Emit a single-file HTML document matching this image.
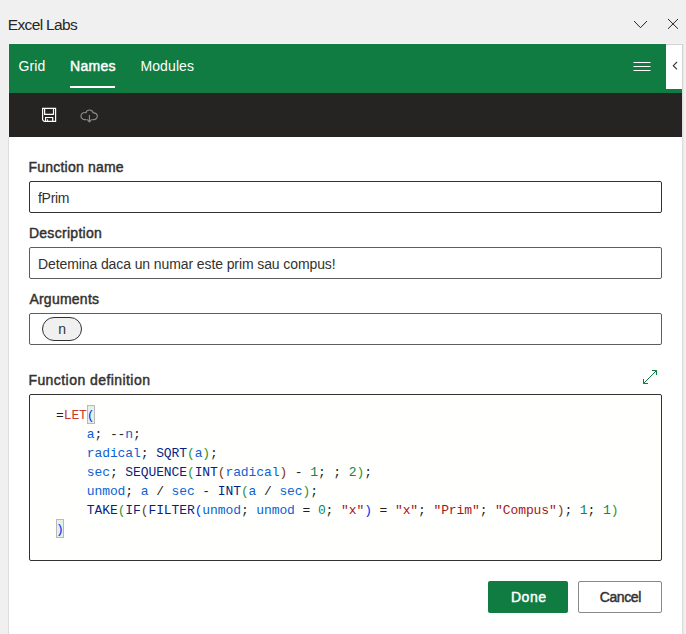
<!DOCTYPE html>
<html lang="en">
<head>
<meta charset="utf-8">
<title>Excel Labs</title>
<style>
  html, body { margin: 0; padding: 0; }
  body {
    width: 686px; height: 634px; overflow: hidden; position: relative;
    background: #f0f0f0;
    font-family: "Liberation Sans", sans-serif;
    color: #323130;
  }
  .abs { position: absolute; }
  .t { position: absolute; white-space: nowrap; line-height: 1; }

  /* task pane title bar */
  #title { left: 7.7px; top: 16.5px; font-size: 15.5px; letter-spacing: -0.63px; color: #262626; }

  /* pane */
  #pane { left: 8px; top: 43px; width: 674px; height: 591px; background: #ffffff;
          border-left: 1px solid #f4f2f3; border-top: 1px solid #f4f2f3; box-sizing: content-box; }
  #paneshadow { left: 682px; top: 44px; width: 2px; height: 590px;
          background: linear-gradient(to right, #d9d9d9, #eeeeee); }

  #green { left: 9px; top: 44px; width: 673px; height: 49px; background: #107c41; }
  #dark  { left: 9px; top: 93px; width: 673px; height: 43.5px; background: #252423; }

  .tab { font-size: 14px; color: #ffffff; top: 59px; }
  #tab1 { left: 18.4px; letter-spacing: 0.15px; }
  #tab2 { left: 70px; -webkit-text-stroke: 0.45px #ffffff; letter-spacing: 0.32px; }
  #tab3 { left: 140.4px; letter-spacing: 0.12px; }
  #underline { left: 70px; top: 86px; width: 45px; height: 2px; background: #ffffff; }

  #collapse { left: 666px; top: 44px; width: 17px; height: 45px; background: #ffffff;
              border-top: 1px solid #d2d2d2; border-right: 1px solid #d2d2d2; box-sizing: border-box; }

  /* form */
  .label { font-size: 14px; -webkit-text-stroke: 0.45px #323130; left: 28.6px; color: #323130; letter-spacing: 0.2px; }
  .box { position: absolute; left: 29px; width: 633px; height: 32px; box-sizing: border-box;
         border: 1px solid #605e5c; border-radius: 2px; background: #fff; }
  .val { font-size: 14px; left: 38px; color: #323130; }

  #pill { left: 42px; top: 317px; width: 40px; height: 24px; box-sizing: border-box;
          border: 1px solid #323130; border-radius: 12px; background: #f0f0f0; }

  #code { left: 29px; top: 394px; width: 633px; height: 167px; box-sizing: border-box;
          border: 1px solid #323130; border-radius: 2px; background: #fffffe; }
  pre { position: absolute; margin: 0; left: 56px; top: 406px;
        font-family: "Liberation Mono", monospace; font-size: 13px; line-height: 19px;
        letter-spacing: -0.1px; color: #1f1f1f; }
  .k { color: #c93a2b; }   /* LET */
  .f { color: #0a1f80; }   /* function names */
  .v { color: #0b62d2; }   /* identifiers */
  .b1 { color: #0431fa; }  /* bracket level 1 */
  .b2 { color: #319331; }  /* bracket level 2 */
  .b3 { color: #7b3814; }  /* bracket level 3 */
  .n { color: #098658; }   /* number */
  .s { color: #a31515; }   /* string */
  .bm { position: absolute; width: 8px; height: 19px; box-sizing: border-box;
        border: 1px solid #b9b9b9; background: #e6f0e6; }

  .btn { position: absolute; top: 581px; height: 32px; box-sizing: border-box; border-radius: 2px; }
  #done { left: 488px; width: 80px; background: #107c41; }
  #cancel { left: 578px; width: 84px; background: #ffffff; border: 1px solid #8a8886; }
  .btxt { font-size: 14px; top: 590px; }
</style>
</head>
<body>

<!-- title bar -->
<div id="title" class="t">Excel Labs</div>
<svg class="abs" style="left:630px;top:14px" width="52" height="20" viewBox="630 14 52 20">
  <polyline points="634,21 640.5,27.7 647,21" fill="none" stroke="#262626" stroke-width="1"/>
  <path d="M668,19 L678,28.8 M678,19 L668,28.8" fill="none" stroke="#262626" stroke-width="1"/>
</svg>

<!-- pane -->
<div id="pane" class="abs"></div>
<div id="paneshadow" class="abs"></div>
<div class="abs" style="left:8px;top:137px;width:1px;height:497px;background:#dddddd"></div>
<div id="green" class="abs"></div>
<div id="dark" class="abs"></div>

<div id="tab1" class="t tab">Grid</div>
<div id="tab2" class="t tab">Names</div>
<div id="tab3" class="t tab">Modules</div>
<div id="underline" class="abs"></div>

<!-- hamburger -->
<svg class="abs" style="left:630px;top:58px" width="24" height="16" viewBox="630 58 24 16">
  <path d="M633.5,62.5 H650.5 M633.5,66.5 H650.5 M633.5,70.5 H650.5" stroke="#ffffff" stroke-width="1" fill="none"/>
</svg>

<div id="collapse" class="abs"></div>
<svg class="abs" style="left:668px;top:58px" width="14" height="16" viewBox="668 58 14 16">
  <polyline points="677,62 673.3,65.7 677,69.4" fill="none" stroke="#323130" stroke-width="1.1"/>
</svg>

<!-- command bar icons -->
<svg class="abs" style="left:38px;top:104px" width="24" height="22" viewBox="38 104 24 22">
  <!-- save -->
  <path d="M42.6,108.3 H55.6 V121.4 H44.2 L42.6,119.8 Z" fill="none" stroke="#ffffff" stroke-width="1.2" stroke-linejoin="miter"/>
  <path d="M44.6,108.3 V114.4 H53.5 V108.3" fill="none" stroke="#ffffff" stroke-width="1.2"/>
  <path d="M45.6,121.4 V117.5 H52.7 V121.4" fill="none" stroke="#ffffff" stroke-width="1.2"/>
  <path d="M47.6,121.4 V119.3" fill="none" stroke="#ffffff" stroke-width="1"/>
</svg>
<svg class="abs" style="left:78px;top:106px" width="24" height="20" viewBox="78 106 24 20">
  <!-- cloud download -->
  <path d="M86.4,119.6 H84.8 A3.55,3.55 0 1 1 85.9,112.8 A3.75,3.75 0 0 1 93.2,112.9 A3.4,3.4 0 1 1 93.4,119.6 H92.4" fill="none" stroke="#8d8b89" stroke-width="1.15"/>
  <path d="M89.4,115 V121.6 M87.1,119.3 L89.4,121.8 L91.7,119.3" fill="none" stroke="#8d8b89" stroke-width="1.15"/>
</svg>

<!-- form -->
<div class="t label" style="top:160px">Function name</div>
<div class="box" style="top:181px; border-color:#323130"></div>
<div class="t val" style="top:190.5px; letter-spacing:-0.3px">fPrim</div>

<div class="t label" style="top:226px; left:28.9px; letter-spacing:0.29px">Description</div>
<div class="box" style="top:247px"></div>
<div class="t val" style="top:256.5px; letter-spacing:-0.1px">Detemina daca un numar este prim sau compus!</div>

<div class="t label" style="top:292px; left:29.4px; letter-spacing:0.24px">Arguments</div>
<div class="box" style="top:313px"></div>
<div id="pill" class="abs"></div>
<div class="t val" style="top:321.6px; left:58.2px">n</div>

<div class="t label" style="top:373px; left:28.4px; letter-spacing:0.44px">Function definition</div>
<svg class="abs" style="left:640px;top:366px" width="22" height="22" viewBox="640 366 22 22">
  <path d="M643.5,383.5 L656.5,370.5 M652,370.5 H656.5 V375 M643.5,379 V383.5 H648" fill="none" stroke="#107c41" stroke-width="1"/>
</svg>

<div id="code" class="abs"></div>
<div class="bm" style="left:87px; top:405px"></div>
<div class="bm" style="left:56px; top:519px"></div>
<pre>=<span class="k">LET</span><span class="b1">(</span>
    <span class="v">a</span>; --<span class="v">n</span>;
    <span class="v">radical</span>; <span class="f">SQRT</span><span class="b2">(</span><span class="v">a</span><span class="b2">)</span>;
    <span class="v">sec</span>; <span class="f">SEQUENCE</span><span class="b2">(</span><span class="f">INT</span><span class="b3">(</span><span class="v">radical</span><span class="b3">)</span> - <span class="n">1</span>; ; <span class="n">2</span><span class="b2">)</span>;
    <span class="v">unmod</span>; <span class="v">a</span> / <span class="v">sec</span> - <span class="f">INT</span><span class="b2">(</span><span class="v">a</span> / <span class="v">sec</span><span class="b2">)</span>;
    <span class="f">TAKE</span><span class="b2">(</span><span class="f">IF</span><span class="b3">(</span><span class="f">FILTER</span><span class="b1">(</span><span class="v">unmod</span>; <span class="v">unmod</span> = <span class="n">0</span>; <span class="s">"x"</span><span class="b1">)</span> = <span class="s">"x"</span>; <span class="s">"Prim"</span>; <span class="s">"Compus"</span><span class="b3">)</span>; <span class="n">1</span>; <span class="n">1</span><span class="b2">)</span>
<span class="b1">)</span></pre>

<!-- buttons -->
<div id="done" class="btn"></div>
<div id="cancel" class="btn"></div>
<div class="t btxt" style="left:510.9px; color:#ffffff; -webkit-text-stroke:0.45px #ffffff; letter-spacing:0.55px">Done</div>
<div class="t btxt" style="left:599.7px; color:#323130; -webkit-text-stroke:0.45px #323130; letter-spacing:-0.4px">Cancel</div>

</body>
</html>
